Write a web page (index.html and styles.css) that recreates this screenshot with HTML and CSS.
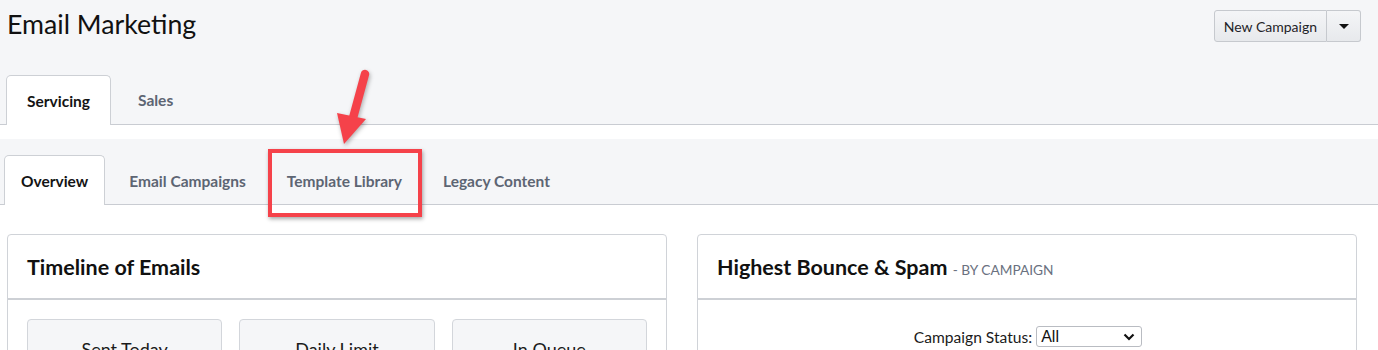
FILE: index.html
```html
<!DOCTYPE html>
<html>
<head>
<meta charset="utf-8">
<link rel="stylesheet" href="styles.css">
</head>
<body>
<div class="page">
  <header class="topbar">
    <h1 class="title">Email Marketing</h1>
    <div class="btn-group">
      <button class="btn">New Campaign</button>
      <button class="btn btn-caret"><span class="caret"></span></button>
    </div>
  </header>
  <nav class="tabs tabs-main">
    <a class="tab active">Servicing</a>
    <a class="tab">Sales</a>
  </nav>
  <div class="content">
    <nav class="tabs tabs-sub">
      <a class="tab active">Overview</a>
      <a class="tab">Email Campaigns</a>
      <a class="tab">Template Library</a>
      <a class="tab">Legacy Content</a>
    </nav>
    <div class="cards">
      <section class="card">
        <div class="card-head"><h2>Timeline of Emails</h2></div>
        <div class="card-body stats">
          <div class="stat">Sent Today</div>
          <div class="stat">Daily Limit</div>
          <div class="stat">In Queue</div>
        </div>
      </section>
      <section class="card">
        <div class="card-head"><h2>Highest Bounce &amp; Spam <span class="sub">- BY CAMPAIGN</span></h2></div>
        <div class="card-body filter">
          <label class="filter-label">Campaign Status:</label>
          <div class="select">All<svg width="12" height="8" viewBox="0 0 12 8"><path d="M1.5 1.5 L6 6 L10.5 1.5" fill="none" stroke="#111" stroke-width="2.2"/></svg></div>
        </div>
      </section>
    </div>
  </div>
  <div class="annot-box"></div>
  <svg class="annot-arrow" width="60" height="100" viewBox="0 0 60 100">
    <line x1="36" y1="8" x2="24" y2="52" stroke="#f5424a" stroke-width="8.5" stroke-linecap="round"/>
    <polygon points="8,47 37,53 15,78" fill="#f5424a"/>
  </svg>
</div>
</body>
</html>
```
FILE: styles.css
```css
* { box-sizing: border-box; }
html, body { margin: 0; padding: 0; }
body {
  background: #ffffff;
  font-family: "Lato", "Noto Sans", sans-serif;
  color: #1b1b1b;
}
.page { position: relative; width: 1378px; height: 350px; overflow: hidden; background: #fff; }
.topbar {
  background: #f5f6f8;
  display: flex;
  justify-content: space-between;
  align-items: flex-start;
  padding: 10px 17px 0 7px;
  height: 75px;
}
.title {
  margin: -2px 0 0;
  font-weight: 400;
  font-size: 26.7px;
  line-height: 32px;
  color: #111;
}
.btn-group { display: flex; }
.btn {
  font-family: inherit;
  font-size: 14px;
  color: #1f2328;
  background: linear-gradient(#f4f5f7, #e7e9ec);
  border: 1px solid #c6c9ce;
  height: 32px;
  padding: 0 9px;
  border-radius: 3px 0 0 3px;
  margin: 0;
}
.btn-caret {
  border-left: none;
  border-radius: 0 3px 3px 0;
  width: 34px;
  display: flex;
  align-items: center;
  justify-content: center;
}
.caret {
  width: 0; height: 0;
  border-left: 5px solid transparent;
  border-right: 5px solid transparent;
  border-top: 5px solid #111;
}
.tabs {
  display: flex;
  border-bottom: 1px solid #c9ccd2;
  background: #f5f6f8;
}
.tab {
  display: flex;
  align-items: center;
  font-weight: 700;
  font-size: 15.5px;
  color: #5d6573;
  border: 1px solid transparent;
  border-bottom: none;
  border-radius: 5px 5px 0 0;
}
.tab.active {
  background: #fff;
  color: #141414;
  border-color: #cdd0d5;
  margin-bottom: -1px;
}
.tabs-main { padding-left: 6px; gap: 6px; height: 50px; }
.tabs-main .tab { padding: 0 20px 0; height: 49px; }
.tabs-main .tab.active { height: 50px; }
.content { padding-top: 14px; background: #fff; }
.tabs-sub { padding-left: 4px; gap: 7px; height: 66px; align-items: flex-end; }
.tabs-sub .tab { padding: 1px 16px 0; height: 49px; }
.tabs-sub .tab.active { height: 50px; }
.cards {
  display: grid;
  grid-template-columns: 660px 660px;
  gap: 30px;
  padding: 29px 0 0 7px;
}
.card {
  border: 1px solid #d0d3d8;
  border-radius: 4px;
  background: #fff;
}
.card-head {
  height: 65px;
  border-bottom: 2px solid #cdd0d5;
  display: flex;
  align-items: center;
  padding: 0 19px;
}
.card-head h2 {
  margin: 0;
  font-size: 21.5px;
  font-weight: 700;
  color: #111;
}
.card-head .sub {
  font-size: 13.7px;
  font-weight: 400;
  color: #6a7180;
}
.stats {
  display: grid;
  grid-template-columns: repeat(3, 1fr);
  gap: 17px;
  padding: 19px 19px 0;
}
.stat {
  background: #f5f6f8;
  border: 1px solid #d3d6db;
  border-radius: 4px;
  height: 80px;
  text-align: center;
  padding-top: 18px;
  font-size: 18px;
  color: #1b1b1b;
}
.filter {
  display: flex;
  justify-content: center;
  align-items: center;
  gap: 4px;
  padding-top: 26px;
  padding-left: 2px;
}
.filter-label { font-size: 15.6px; color: #1b1b1b; }
.select {
  width: 106px;
  height: 21px;
  border: 1px solid #b9bcc2;
  border-radius: 3px;
  font-family: "Liberation Sans", Arial, sans-serif;
  font-size: 16px;
  line-height: 19px;
  padding: 0 6px 0 4px;
  display: flex;
  justify-content: space-between;
  align-items: center;
  background: #fff;
  color: #111;
}
.annot-box {
  position: absolute;
  left: 268px;
  top: 149px;
  width: 154px;
  height: 68px;
  border: 4px solid #f5424a;
  box-shadow: 1px 2px 4px rgba(0,0,0,0.35);
}
.annot-arrow {
  position: absolute;
  left: 329px;
  top: 66px;
  filter: drop-shadow(1px 2px 2px rgba(0,0,0,0.3));
}
```
